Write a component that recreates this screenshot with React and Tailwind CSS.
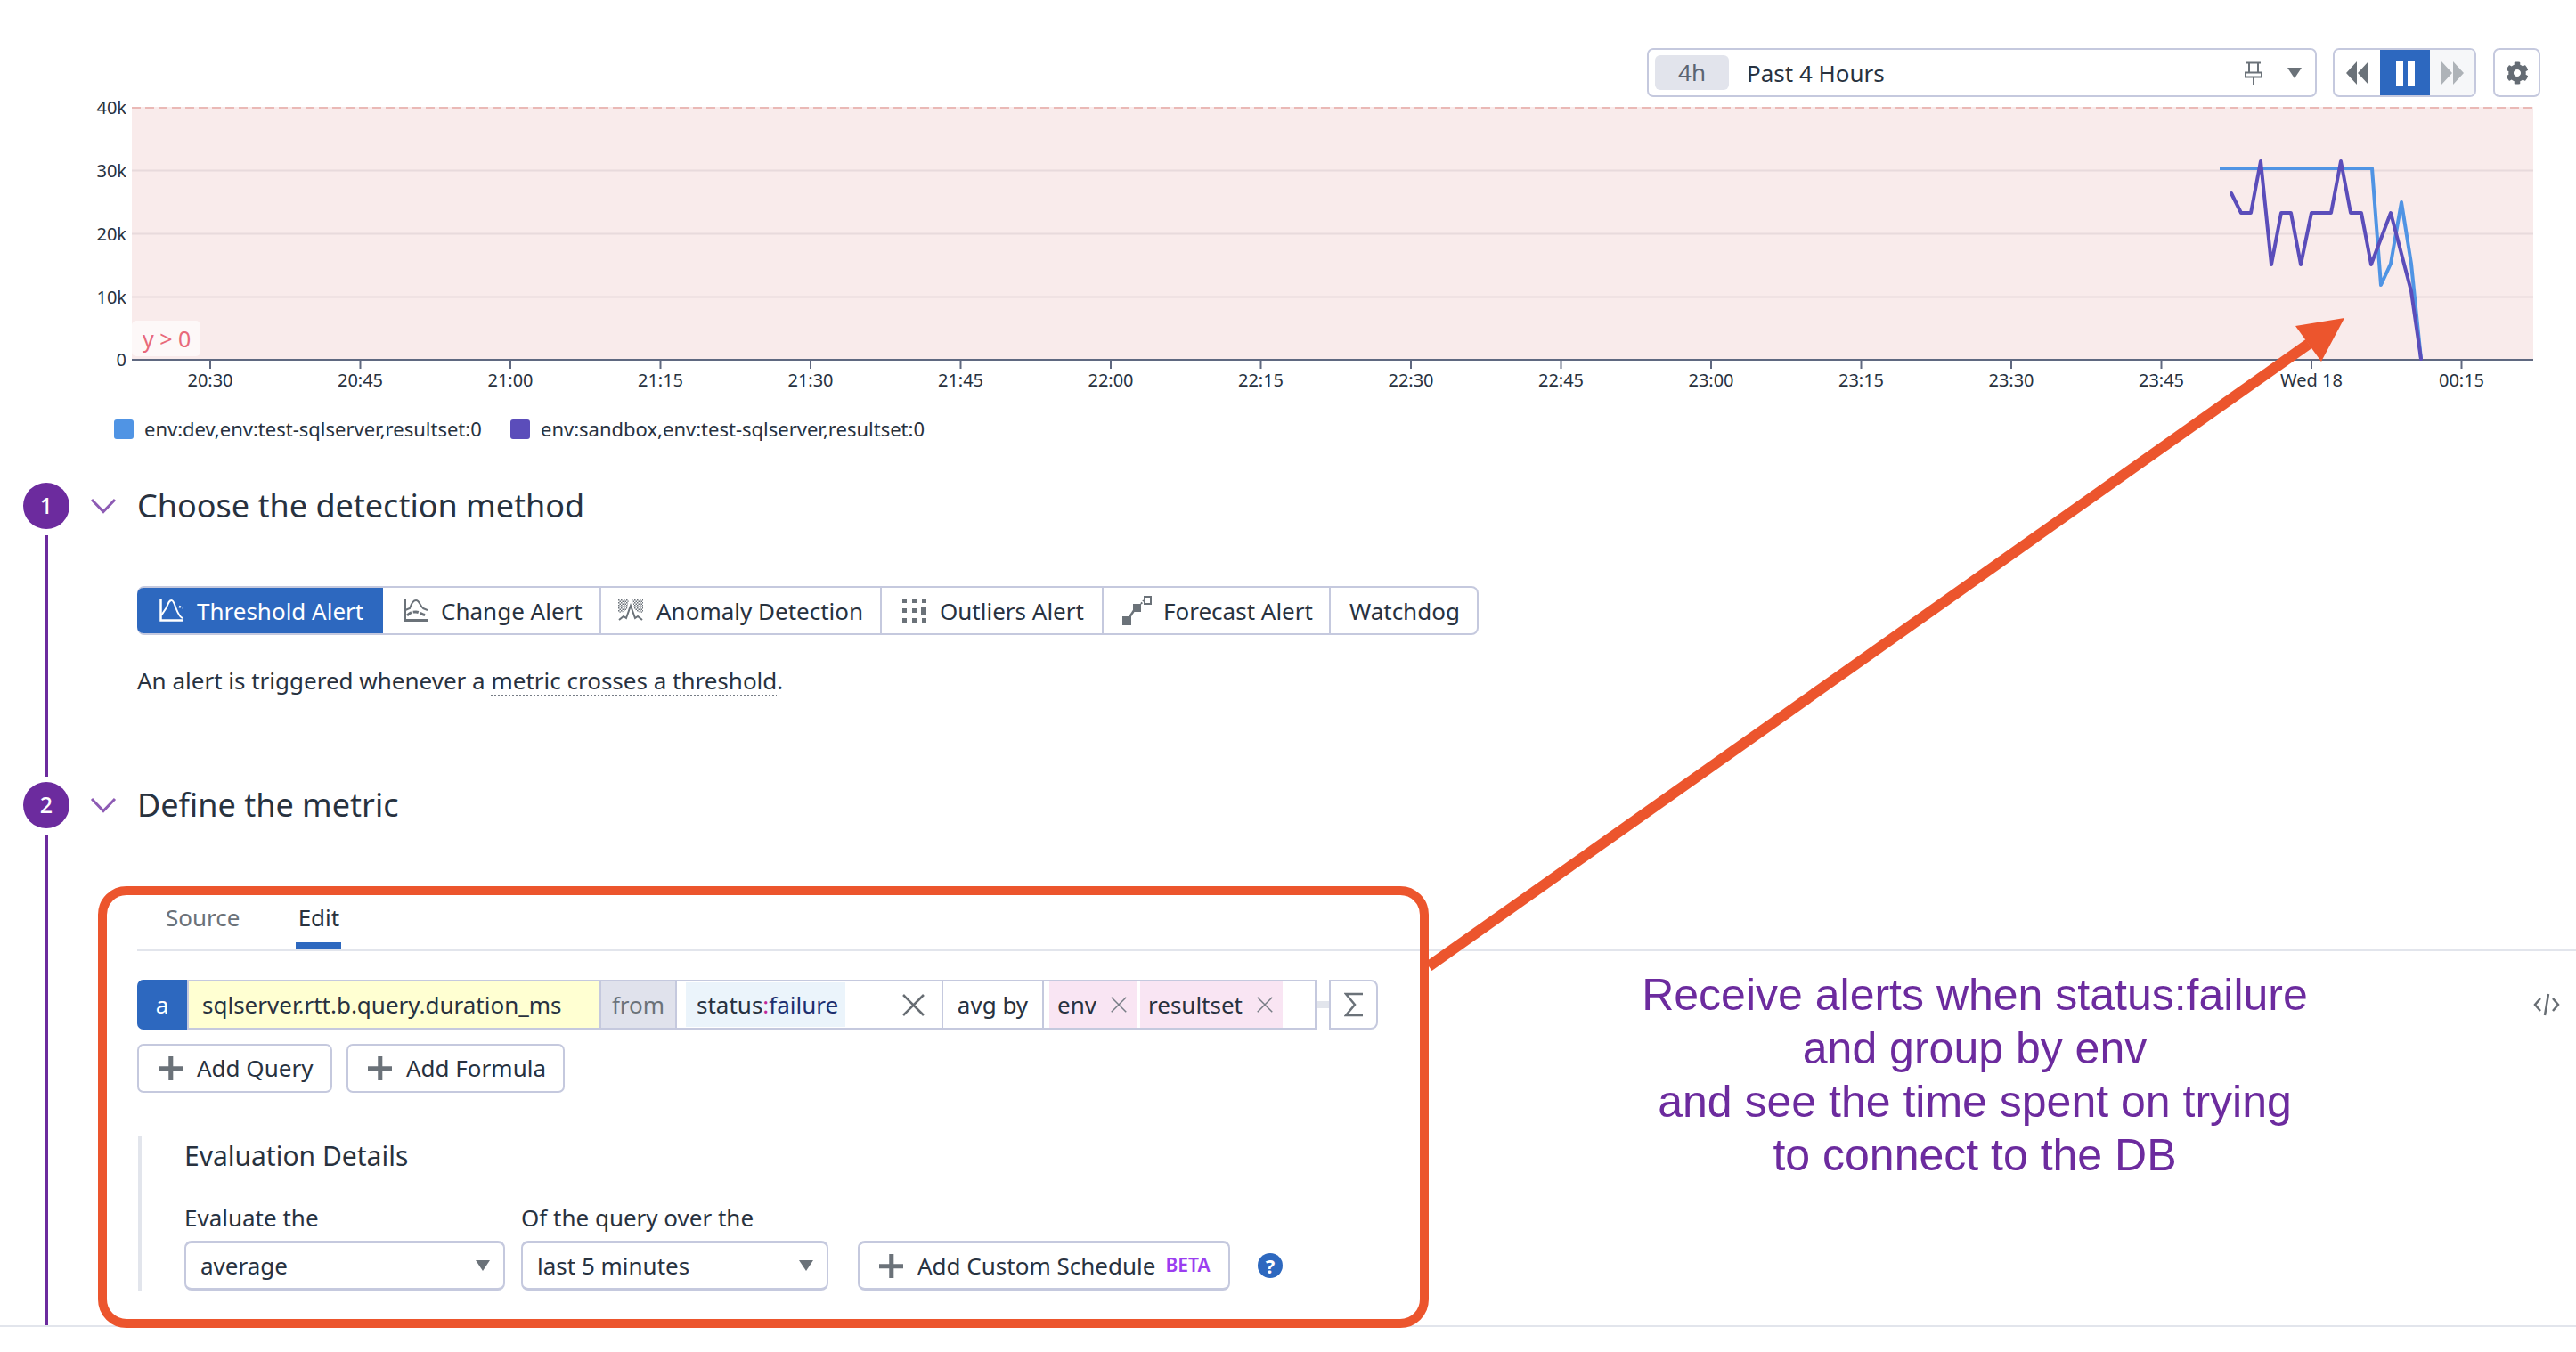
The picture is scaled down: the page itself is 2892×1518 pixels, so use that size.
import React from "react";
import { FaCog } from "react-icons/fa";

const ticks = ["20:30","20:45","21:00","21:15","21:30","21:45","22:00","22:15","22:30","22:45","23:00","23:15","23:30","23:45","Wed 18","00:15"];
const tickX = ticks.map((_, i) => 236 + i * 168.5);
const gridY = [[120.5,"40k"],[191.5,"30k"],[262.5,"20k"],[333.5,"10k"],[404,"0"]];

function Chart() {
  return (
    <svg className="block mt-[1px]" width="2892" height="340" viewBox="0 110 2892 340">
      <rect x="148" y="120" width="2696" height="284" fill="#f9ebeb" />
      <line x1="148" x2="2844" y1="121" y2="121" stroke="#eab9b6" strokeWidth="2" strokeDasharray="10 5" />
      {[191.5,262.5,333.5].map(y => <line key={y} x1="148" x2="2844" y1={y} y2={y} stroke="#e8dadc" strokeWidth="2" />)}
      <line x1="148" x2="2844" y1="404" y2="404" stroke="#5f6880" strokeWidth="2" />
      {gridY.map(([y,l]) => <text key={l} x="142" y={y+7} textAnchor="end" fontSize="20" fill="#28323f" fontFamily="'Noto Sans',sans-serif">{l}</text>)}
      {ticks.map((t,i) => (
        <g key={t}>
          <line x1={tickX[i]} x2={tickX[i]} y1="404" y2="414" stroke="#5f6880" strokeWidth="2" />
          <text x={tickX[i]} y="434" textAnchor="middle" fontSize="20" fill="#28323f" fontFamily="'Noto Sans',sans-serif">{t}</text>
        </g>
      ))}
      <rect x="148" y="360" width="77" height="40" rx="5" fill="#fdf8f8" />
      <text x="160" y="390" fontSize="25" fill="#e8697a" fontFamily="'Noto Sans',sans-serif">y &gt; 0</text>
      <polyline fill="none" stroke="#5094e4" strokeWidth="4" strokeLinejoin="round"
        points="2492,189 2663,189 2673,320 2684,296 2696,227 2707,296 2718,403" />
      <polyline fill="none" stroke="#5b4dba" strokeWidth="4" strokeLinejoin="round" strokeLinecap="round"
        points="2505,217 2516,239 2527,239 2538,181 2550,297 2561,239 2572,239 2583,297 2595,239 2617,239 2628,181 2639,239 2651,239 2662,297 2684,239 2707,327 2718,403" />
    </svg>
  );
}

const Tri = ({ className }) => (
  <svg className={className} width="16" height="12" viewBox="0 0 16 12"><path d="M0 0H16L8 12Z" fill="#6b7279" /></svg>
);
const Plus = ({ size = 24 }) => (
  <svg width={size} height={size} viewBox="0 0 24 24" className="shrink-0"><path d="M10 0h4.500v10H24v4.500h-9.500V24H10v-9.500H0V10h10Z" fill="#6b7279" /></svg>
);
const XIcon = ({ size, w = 2, color = "#777d86" }) => (
  <svg width={size} height={size} viewBox="0 0 24 24" className="shrink-0"><path d="M1 1L23 23M23 1L1 23" stroke={color} strokeWidth={w} fill="none" /></svg>
);

const tabIcon = {
  threshold: c => (
    <svg width="27" height="25" viewBox="0 0 27 25" fill="none" stroke={c} strokeWidth="2">
      <path d="M1.500 0V23.500H27" strokeWidth="2.500" />
      <path d="M2 18L8 9C10 4 11 1 13.500 1C16 1 17 6 19 11C21 16 23 20 26 21" />
      <path d="M22 8l4 1.500" strokeWidth="2.500" strokeDasharray="2 2" />
    </svg>
  ),
  change: c => (
    <svg width="27" height="25" viewBox="0 0 27 25" fill="none" stroke={c} strokeWidth="2">
      <path d="M1.500 0V23.500H27" strokeWidth="3" />
      <path d="M2 12L7 10C9 4 11 1 14 1C18 1 19 8 22 10L27 12" />
      <path d="M4 18C8 14 10 14 14 14C18 14 20 17 26 18" strokeWidth="3" strokeDasharray="6 2" />
    </svg>
  ),
  anomaly: c => (
    <svg width="28" height="25" viewBox="0 0 28 25" fill="none">
      <defs>
        <pattern id="anomalydots" width="3" height="3" patternUnits="userSpaceOnUse">
          <rect width="1.500" height="1.500" fill={c} />
          <rect x="1.500" y="1.500" width="1.500" height="1.500" fill={c} />
        </pattern>
      </defs>
      <path d="M0 0H12L10 11L6 14L0 15ZM16 0H28V15L22 14L18 11Z" fill="url(#anomalydots)" />
      <path d="M1 23L6 19L9 21L14 7L19 21L22 19L27 23" stroke={c} strokeWidth="2" />
    </svg>
  ),
  outliers: c => (
    <svg width="27" height="27" viewBox="0 0 27 27" fill={c}>
      <rect x="0" y="0" width="5" height="5" /><rect x="11" y="0" width="5" height="5" /><rect x="22" y="0" width="5" height="5" />
      <rect x="0" y="11" width="5" height="5" /><rect x="11" y="11" width="5" height="5" /><rect x="21" y="9" width="6" height="9" />
      <rect x="0" y="22" width="5" height="5" /><rect x="11" y="22" width="5" height="5" /><rect x="22" y="22" width="5" height="5" />
    </svg>
  ),
  forecast: c => (
    <svg width="33" height="33" viewBox="0 0 33 33" fill="none">
      <rect x="0" y="23" width="10" height="10" fill={c} />
      <path d="M8 24L14 15" stroke={c} strokeWidth="2.500" />
      <rect x="12" y="9" width="9" height="9" fill={c} />
      <path d="M21 9l3-4" stroke={c} strokeWidth="2" strokeDasharray="2 1.500" />
      <rect x="25" y="1" width="7" height="8" stroke={c} strokeWidth="2" />
    </svg>
  ),
};

function ModeTab({ w, icon, label, active, last, pad = "pl-[21px]", gap = "gap-[15px]" }) {
  const color = active ? "#ffffff" : "#6b7279";
  return (
    <div className={`${w} h-full flex items-center ${gap} ${pad} ${active ? "bg-[#2d68bf] text-white rounded-l-[7px]" : "text-[#28323f]"} ${last || active ? "" : "border-r-2 border-[#c5c9de]"}`}>
      {icon && tabIcon[icon](color)}
      <span className="translate-y-[1px]">{label}</span>
    </div>
  );
}

const Chevron = () => (
  <svg width="30" height="18" viewBox="0 0 30 18" fill="none"><path d="M2 2L15 15.500L28 2" stroke="#8d5bb4" strokeWidth="3" /></svg>
);

function StepHeader({ title }) {
  return (
    <div className="h-[52px] flex items-center">
      <div className="w-[50px] -ml-[3px] mr-[3px] flex justify-start"><Chevron /></div>
      <h2 className="text-[36px] font-normal text-[#28323f] leading-none">{title}</h2>
    </div>
  );
}

function Rail({ n, end }) {
  return (
    <div className="w-[104px] shrink-0 flex flex-col items-center">
      <div className="w-[52px] h-[52px] rounded-full bg-[#6c2b9e] text-white text-[25px] font-medium flex items-center justify-center">{n}</div>
      <div className={`w-[4px] flex-1 mt-[7px] ${end ? "" : "mb-[6px]"} bg-[#6c2b9e]`} />
    </div>
  );
}

function Annotation() {
  return (
    <>
      <div className="absolute left-[110px] top-[995px] w-[1494px] h-[496px] border-[10px] border-[#ec552d] rounded-[32px] pointer-events-none" />
      <svg className="absolute left-0 top-0 pointer-events-none" width="2892" height="1518" viewBox="0 0 2892 1518" fill="none">
        <path d="M1604 1085L2592 386" stroke="#ec552d" strokeWidth="12" />
        <path d="M2632 357L2577 366L2606 406Z" fill="#ec552d" />
      </svg>
    </>
  );
}

export default function App() {
  return (
    <div className="relative w-[2892px] h-[1518px] overflow-hidden bg-white font-['Noto_Sans',sans-serif] text-[26px] text-[#28323f]">
      {/* toolbar */}
      <div className="pt-[54px] pr-[40px] flex justify-end">
        <div className="w-[752px] h-[55px] border-2 border-[#c5c9de] rounded-[7px] flex items-center pl-[7px] pr-[15px]">
          <div className="w-[83px] h-[39px] rounded-[6px] bg-[#e2e4ec] text-[#5b6472] flex items-center justify-center">4h</div>
          <span className="ml-[20px] flex-1 translate-y-[1px]">Past 4 Hours</span>
          <svg width="20" height="26" viewBox="0 0 20 26" fill="none" stroke="#6b7279" strokeWidth="2">
            <path d="M2 1.500H18M5 1.500V12M15 1.500V12M1 17.500H19V12.500H1ZM10 17V26" />
          </svg>
          <Tri className="ml-[28px]" />
        </div>
        <div className="ml-[18px] w-[161px] h-[55px] border-2 border-[#c5c9de] rounded-[7px] flex overflow-hidden">
          <div className="w-[51px] flex items-center justify-center">
            <svg width="26" height="26" viewBox="0 0 26 26" fill="#6b7279"><path d="M12 0V26L0 13ZM25 0V26L13 13Z" /></svg>
          </div>
          <div className="w-[56px] bg-[#2d68bf] flex items-center justify-center gap-[5px] -my-[2px]">
            <div className="w-[8px] h-[28px] bg-white" /><div className="w-[8px] h-[28px] bg-white" />
          </div>
          <div className="flex-1 bg-[#f6f7f9] flex items-center justify-center">
            <svg width="26" height="26" viewBox="0 0 26 26" fill="#aeb3b8"><path d="M1 0V26L13 13ZM14 0V26L26 13Z" /></svg>
          </div>
        </div>
        <div className="ml-[19px] w-[53px] h-[55px] border-2 border-[#c5c9de] rounded-[7px] flex items-center justify-center">
          <FaCog className="w-[26px] h-[26px] text-[#656c74]" />
        </div>
      </div>

      <Chart />

      {/* legend */}
      <div className="mt-[21px] pl-[128px] h-[22px] flex items-center text-[22px] leading-none">
        <div className="w-[22px] h-[22px] rounded-[3px] bg-[#5094e4]" />
        <span className="ml-[12px] w-[411px] -translate-y-[1px]">env:dev,env:test-sqlserver,resultset:0</span>
        <div className="w-[22px] h-[22px] rounded-[3px] bg-[#5b4dba]" />
        <span className="ml-[12px] -translate-y-[1px]">env:sandbox,env:test-sqlserver,resultset:0</span>
      </div>

      {/* step 1 */}
      <div className="mt-[49px] h-[336px] flex">
        <Rail n="1" />
        <div className="flex-1">
          <StepHeader title="Choose the detection method" />
          <div className="mt-[64px] ml-[50px] w-[1506px] h-[55px] border-2 border-[#c5c9de] rounded-[8px] flex items-center">
            <ModeTab w="w-[276px] -ml-[2px]" icon="threshold" label="Threshold Alert" active pad="pl-[25px]" />
            <ModeTab w="w-[245px]" icon="change" label="Change Alert" pad="pl-[23px]" />
            <ModeTab w="w-[315px]" icon="anomaly" label="Anomaly Detection" pad="pl-[19px]" />
            <ModeTab w="w-[249px]" icon="outliers" label="Outliers Alert" pad="pl-[23px]" />
            <ModeTab w="w-[255px]" icon="forecast" label="Forecast Alert" pad="pl-[21px]" gap="gap-[13px]" />
            <ModeTab w="flex-1" label="Watchdog" last />
          </div>
          <p className="mt-[33px] ml-[50px] leading-[36px]">
            An alert is triggered whenever a <span className="underline decoration-dotted decoration-2 decoration-[#777d86] underline-offset-[6px]">metric crosses a threshold</span>.
          </p>
        </div>
      </div>

      {/* step 2 */}
      <div className="h-[610px] flex">
        <Rail n="2" end />
        <div className="flex-1 min-w-0">
          <StepHeader title="Define the metric" />
          {/* source/edit tabs */}
          <div className="mt-[68px] ml-[50px] h-[70px] border-b-2 border-[#e2e5ec] flex items-start">
            <span className="ml-[32px] mt-[13px] text-[#6b7279]">Source</span>
            <div className="ml-[63px] w-[51px] h-[68px] border-b-[8px] border-[#2d68bf] pt-[13px] flex justify-center"><span>Edit</span></div>
          </div>
          {/* query */}
          <div className="mt-[32px] ml-[50px] flex items-center">
            <div className="w-[1324px] h-[56px] border-2 border-[#c5c9de] rounded-l-[8px] flex items-stretch">
              <div className="-ml-[2px] -my-[2px] w-[56px] bg-[#2d68bf] rounded-l-[7px] text-white flex items-center justify-center">a</div>
              <div className="w-[463px] bg-[#ffffd2] pl-[15px] flex items-center border-l-2 border-[#c5c9de]">sqlserver.rtt.b.query.duration_ms</div>
              <div className="w-[87px] bg-[#e0e2ec] text-[#6b7279] flex items-center justify-center border-x-2 border-[#c5c9de]">from</div>
              <div className="w-[299px] pl-[10px] flex items-center border-r-2 border-[#c5c9de]">
                <div className="w-[179px] h-[50px] bg-[#ebf4fb] pl-[12px] flex items-center whitespace-nowrap">status<span className="text-[#c0289a]">:</span><span className="text-[#1d2f6f]">failure</span></div>
                <div className="ml-[64px]"><XIcon size={25} w={2.5} color="#676d73" /></div>
              </div>
              <div className="w-[113px] flex items-center justify-center border-r-2 border-[#c5c9de]">avg by</div>
              <div className="ml-[6px] w-[98px] bg-[#f9e5f3] pl-[9px] flex items-center gap-[16px]">env <XIcon size={18} color="#777d86" /></div>
              <div className="ml-[4px] w-[160px] bg-[#f9e5f3] pl-[9px] flex items-center gap-[16px]">resultset <XIcon size={18} color="#777d86" /></div>
            </div>
            <div className="w-[14px] h-[8px] bg-[#e2e5ec]" />
            <div className="w-[55px] h-[56px] border-2 border-[#c5c9de] rounded-r-[8px] flex items-center justify-center">
              <svg width="22" height="28" viewBox="0 0 22 28" fill="none" stroke="#6b7279" strokeWidth="2.500"><path d="M21 2H2L12 14L2 26H21" /></svg>
            </div>
          </div>
          {/* buttons */}
          <div className="mt-[16px] ml-[50px] flex gap-[16px]">
            <div className="w-[219px] h-[55px] border-2 border-[#c5c9de] rounded-[7px] flex items-center pl-[22px] gap-[16px]"><Plus size={27} />Add Query</div>
            <div className="w-[245px] h-[55px] border-2 border-[#c5c9de] rounded-[7px] flex items-center pl-[22px] gap-[16px]"><Plus size={27} />Add Formula</div>
          </div>
          {/* evaluation */}
          <div className="mt-[49px] ml-[51px] h-[173px] border-l-4 border-[#e2e5ec] pl-[48px]">
            <div className="text-[30px] leading-[44px]">Evaluation Details</div>
            <div className="mt-[30px] flex items-end">
              <div className="w-[378px]">
                <div className="leading-[34px] mb-[9px]">Evaluate the</div>
                <div className="w-[360px] h-[56px] border-2 border-[#c5c9de] border-t-[3px] border-b-[3px] rounded-[8px] pl-[16px] pr-[15px] flex items-center justify-between">average<Tri /></div>
              </div>
              <div className="w-[378px]">
                <div className="leading-[34px] mb-[9px]">Of the query over the</div>
                <div className="w-[345px] h-[56px] border-2 border-[#c5c9de] border-t-[3px] border-b-[3px] rounded-[8px] pl-[16px] pr-[15px] flex items-center justify-between">last 5 minutes<Tri /></div>
              </div>
              <div className="w-[418px] h-[56px] border-2 border-[#c5c9de] border-t-[3px] border-b-[3px] rounded-[8px] pl-[22px] flex items-center gap-[16px] whitespace-nowrap"><Plus size={27} />Add Custom Schedule<span className="text-[21px] font-semibold text-[#9b3df0] ml-[-5px]">BETA</span></div>
              <div className="ml-[31px] mb-[14px] w-[28px] h-[28px] rounded-full bg-[#2d68bf] text-white text-[22px] font-bold flex items-center justify-center leading-none">?</div>
            </div>
          </div>
        </div>
      </div>

      {/* bottom rule */}
      <div className="h-[2px] bg-[#e2e5ec]" />

      <Annotation />

      {/* callout */}
      <div className="absolute left-[1717px] top-[1087px] w-[1000px] text-center text-[50px] leading-[60px] text-[#6c2b9e] font-['Liberation_Sans',sans-serif]">
        Receive alerts when status:failure<br />and group by env<br />and see the time spent on trying<br />to connect to the DB
      </div>

      {/* code icon */}
      <svg className="absolute left-[2844px] top-[1115px]" width="30" height="26" viewBox="0 0 30 26" fill="none" stroke="#676d73" strokeWidth="2.500">
        <path d="M8 6L2 13L8 20M22 6L28 13L22 20M17 1L13 25" />
      </svg>
    </div>
  );
}
